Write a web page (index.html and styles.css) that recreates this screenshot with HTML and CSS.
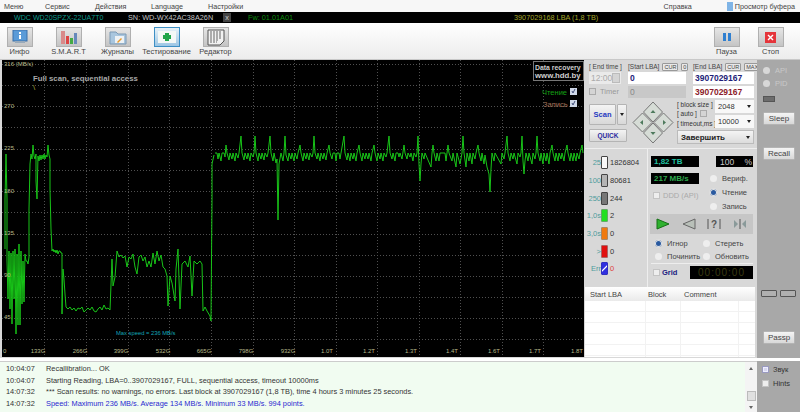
FILE: index.html
```html
<!DOCTYPE html>
<html>
<head>
	<title>Victoria</title>
	<link rel="stylesheet" href="styles.css">
</head>
<body>
	<div class="menu">
		<span class="m1">Меню</span>
		<span class="m2">Сервис</span>
		<span class="m3">Действия</span>
		<span class="m4">Language</span>
		<span class="m5">Настройки</span>
		<span class="help">Справка</span>
		<span class="buffer"><i class="buf_icon"></i>Просмотр буфера</span>
	</div>

	<div class="drive">
		<span class="d_model">WDC WD20SPZX-22UA7T0</span>
		<span class="d_sn">SN: WD-WX42AC38A26N</span>
		<span class="d_x">x</span>
		<span class="d_fw">Fw: 01.01A01</span>
		<span class="d_lba">3907029168 LBA (1,8 TB)</span>
	</div>

	<div class="toolbar">
		<div class="tool">
			<div class="tbtn">
				<svg width="16" height="14" viewBox="0 0 16 14"><rect x="1" y="0" width="14" height="11" fill="#5b9bd8" stroke="#3a6ea8"/><rect x="3" y="11" width="10" height="2" fill="#9ab"/><rect x="7" y="2" width="2" height="2" fill="#fff"/><rect x="7" y="5" width="2" height="4" fill="#fff"/></svg>
			</div>
			<span>Инфо</span>
		</div>
		<div class="tool">
			<div class="tbtn">
				<svg width="18" height="15" viewBox="0 0 18 15"><rect x="1" y="1" width="4" height="13" fill="#d98a8a"/><rect x="6" y="6" width="3" height="8" fill="#d44"/><rect x="10" y="8" width="3" height="6" fill="#4a4"/><rect x="14" y="3" width="3" height="11" fill="#68b"/></svg>
			</div>
			<span>S.M.A.R.T</span>
		</div>
		<div class="tool">
			<div class="tbtn">
				<svg width="18" height="15" viewBox="0 0 18 15"><path d="M1 2h6l2 2h8v10H1z" fill="#a9c6de" stroke="#7d9ab5"/><rect x="6" y="6" width="9" height="7" fill="#eef2f5"/><path d="M8 12l4-4 1 1-4 4z" fill="#e89a2c"/></svg>
			</div>
			<span>Журналы</span>
		</div>
		<div class="tool">
			<div class="tbtn tbtn_on">
				<svg width="20" height="14" viewBox="0 0 20 14"><rect x="1" y="1" width="18" height="12" fill="#f4f8f6"/><path d="M8 3h4v2h2v4h-2v2H8V9H6V5h2z" fill="#21a64a"/></svg>
			</div>
			<span>Тестирование</span>
		</div>
		<div class="tool">
			<div class="tbtn">
				<svg width="20" height="17" viewBox="0 0 20 17"><path d="M2 1h16v11l-4 4H2z" fill="#f2f2f2" stroke="#555"/><path d="M4 3h12M4 5h12M4 7h12M4 9h12M4 11h9M4 13h7" stroke="#666" stroke-dasharray="2 1"/></svg>
			</div>
			<span>Редактор</span>
		</div>
		<div class="tool tool_right">
			<div class="tbtn">
				<svg width="8" height="8" viewBox="0 0 8 8"><rect x="0" y="0" width="3" height="8" fill="#2f7fd0"/><rect x="5" y="0" width="3" height="8" fill="#2f7fd0"/></svg>
			</div>
			<span>Пауза</span>
		</div>
		<div class="tool">
			<div class="tbtn">
				<svg width="11" height="11" viewBox="0 0 11 11"><rect width="11" height="11" fill="#e5343a"/><path d="M3 3l5 5M8 3l-5 5" stroke="#fff" stroke-width="1.4"/></svg>
			</div>
			<span>Стоп</span>
		</div>
	</div>

	<div class="main">
		<div class="chart">
			<svg width="582" height="297" viewBox="2 61 582 297">
				<rect x="2" y="61" width="582" height="297" fill="#000"/>
				<path class="grid" d="M2 65.5H584M2 86.5H584M2 107.5H584M2 128.5H584M2 150.5H584M2 171.5H584M2 192.5H584M2 213.5H584M2 235.5H584M2 256.5H584M2 277.5H584M2 298.5H584M2 319.5H584M2 340.5H584"/>
				<path class="grid" d="M44.5 61V358M86.5 61V358M128.5 61V358M169.5 61V358M211.5 61V358M253.5 61V358M294.5 61V358M336.5 61V358M377.5 61V358M419.5 61V358M460.5 61V358M502.5 61V358M543.5 61V358"/>

				<polyline class="trace" points="5,250 5,200 6,155 7,200 7,262 8,300 9,252 10,310 11,254 12,325 13,252 14,300 15,250 16,335 17,255 18,326 19,245 20,326 21,252 22,305 23,262 24,303 25,255 26,262 27,262 28,265 29,258 29,210 30,165 31,155 32,160 33,146 34,157 35,160 36,155 36,182 37,200 38,157 39,162 40,156 41,161 42,156 43,160 44,155 45,160 46,156 47,158 48,146 49,156 50,160 50,190 51,230 52,252 53,250 54,253 55,251 56,254 57,251 58,255 59,252 60,252 61,254 62,254 62,315 63,270 64,280 65,295 66,308 68,310 70,308 72,311 74,309 76,312 78,309 80,310 82,308 84,313 86,311 88,309 90,311 92,308 94,312 96,313 98,310 100,308 102,311 104,306 106,310 108,309 110,311 112,260 113,287 115,278 117,252 119,258 121,256 123,259 125,257 127,268 129,258 131,260 133,255 135,268 137,275 139,258 141,256 143,262 145,258 147,268 149,262 151,268 153,254 155,265 157,252 159,262 161,256 163,268 165,270 167,277 168,307 170,277 172,284 175,302 176,270 178,250 180,310 182,265 185,262 188,268 190,257 192,297 194,262 197,265 200,262 202,265 203,312 205,308 207,312 210,317 211,322 212,200 212,165 214,156"/>
				<polyline class="trace" points="215,154 217,154 218,160 219,154 221,162 222,154 224,154 225,158 226,146 227,154 229,161 230,154 232,160 233,154 235,162 236,154 238,159 239,154 241,137 242,154 244,161 245,154 247,160 248,154 250,162 251,154 253,158 254,154 255,137 256,154 258,162 259,154 261,160 262,154 264,161 265,154 267,158 268,154 270,137 271,154 273,162 274,154 276,164 277,160 278,221 279,165 281,154 283,162 284,154 285,137 286,156 288,162 289,154 291,160 292,154 294,162 295,154 297,160 298,154 300,146 301,154 303,162 304,154 306,160 307,154 309,161 310,154 312,158 313,154 314,137 315,154 317,160 318,154 320,162 321,154 323,160 324,154 326,161 327,154 329,146 330,154 332,160 333,154 335,154 336,162 337,154 339,154 340,160 341,154 344,137 345,154 347,161 348,154 350,162 351,154 353,160 354,154 356,162 357,154 359,146 360,154 362,162 363,154 365,160 366,154 368,160 369,154 371,162 372,154 374,146 375,154 377,162 378,154 380,160 381,154 383,162 384,154 386,158 387,154 389,137 390,154 392,160 393,154 395,162 396,154 398,154 399,158 400,154 402,160 404,146 405,154 407,160 408,154 410,158 411,154 413,162 414,154 416,158 417,154 418,137 419,165 420,182 421,165 422,154 424,160 425,154 431,168 432,154 433,146 434,154 436,162 437,154 439,162 440,154 445,154 446,162 447,154 448,146 449,154 452,162 453,154 456,168 457,154 460,165 462,154 463,137 464,154 466,168 467,154 469,162 470,154 472,165 473,154 475,160 476,154 478,146 479,154 481,162 482,154 484,165 485,156 487,168 489,175 490,193 491,170 492,154 494,162 495,154 501,165 502,154 504,160 505,154 507,137 508,154 510,162 511,154 513,160 514,154 517,165 518,154 520,158 521,154 522,137 523,162 524,175 525,162 526,154 528,162 529,154 532,165 533,154 535,160 536,154 537,137 538,154 540,162 541,154 543,165 544,154 546,162 547,154 549,165 550,154 552,146 553,154 555,162 556,154 558,162 559,154 561,160 562,154 564,162 565,154 567,146 568,154 570,162 571,154 573,162 574,154 576,162 577,154 579,160 580,154 582,146 583,154"/>

				<text class="tick" x="4" y="67">316 (MB/s)</text>
				<text class="tick" x="4" y="109">270</text>
				<text class="tick" x="4" y="151">225</text>
				<text class="tick" x="4" y="194">180</text>
				<text class="tick" x="4" y="236">135</text>
				<text class="tick" x="4" y="278">90</text>
				<text class="tick" x="4" y="320">45</text>

				<text class="tick" x="3" y="354">0</text>
				<text class="tick_x" x="38" y="354">133G</text>
				<text class="tick_x" x="80" y="354">266G</text>
				<text class="tick_x" x="121" y="354">399G</text>
				<text class="tick_x" x="163" y="354">532G</text>
				<text class="tick_x" x="204" y="354">665G</text>
				<text class="tick_x" x="246" y="354">798G</text>
				<text class="tick_x" x="288" y="354">932G</text>
				<text class="tick_x" x="327" y="354">1.0T</text>
				<text class="tick_x" x="369" y="354">1.2T</text>
				<text class="tick_x" x="411" y="354">1.3T</text>
				<text class="tick_x" x="452" y="354">1.4T</text>
				<text class="tick_x" x="494" y="354">1.6T</text>
				<text class="tick_x" x="535" y="354">1.7T</text>
				<text class="tick_x" x="577" y="354">1.8T</text>

				<text class="title" x="33" y="82">Full scan, sequential access</text>
				<text class="slash" x="33" y="91">\</text>
				<text class="maxspeed" x="116" y="336">Max speed = 236 MB/s</text>

				<rect x="533.5" y="62.5" width="50" height="19" fill="#000" stroke="#777"/>
				<text class="rec" x="535" y="70.5">Data recovery</text>
				<text class="rec rec_b" x="535" y="79">www.hdd.by</text>

				<text class="read_lbl" x="542" y="96">Чтение</text>
				<rect x="570" y="89" width="7" height="7" fill="#cfd8e8"/>
				<path d="M572 92l1 2 2-4" class="chk"/>
				<text class="write_lbl" x="543" y="108">Запись</text>
				<rect x="570" y="101" width="7" height="7" fill="#cfd8e8"/>
				<path d="M572 104l1 2 2-4" class="chk"/>
			</svg>
		</div>

		<div class="panel">
			<div class="controls">
				<div class="lba">
					<div class="head"><span>[ End time ]</span></div>
					<div class="head"><span>[Start LBA]</span><b class="mini">CUR</b><b class="mini">0</b></div>
					<div class="head"><span>[End LBA]</span><b class="mini">CUR</b><b class="mini">MAX</b></div>

					<div class="field field_off time">12:00<i class="spin"></i></div>
					<div class="field navy">0</div>
					<div class="field navy">3907029167</div>

					<div class="timer"><i class="cb cb_off"></i>Timer</div>
					<div class="field field_gray">0</div>
					<div class="field maroon">3907029167</div>
				</div>

				<div class="scan_row">
					<div class="scan_col">
						<div class="scan_top">
							<div class="btn scan">Scan</div>
							<div class="btn scan_drop"><i class="arr"></i></div>
						</div>
						<div class="btn quick">QUICK</div>
					</div>

					<svg class="pad" width="42" height="43" viewBox="0 0 42 43">
						<g fill="#d6dcd6" stroke="#777">
							<path d="M21 1l9.5 10-9.5 10-9.5-10z"/>
							<path d="M21 22l9.5 10-9.5 10-9.5-10z"/>
							<path d="M10.5 12l9.5 9.500-9.5 9.500L1 21.500z"/>
							<path d="M31.5 12l9.5 9.500-9.500 9.500-9.500-9.500z"/>
						</g>
						<g fill="#4d7a5c">
							<path d="M21 9l-2.5 3h5z"/>
							<path d="M21 34l-2.5-3h5z"/>
							<path d="M8 21.5l3-2.5v5z"/>
							<path d="M34 21.5l-3-2.5v5z"/>
						</g>
					</svg>

					<div class="block_col">
						<div class="block_top">
							<div class="block_lbls">
								<span>[ block size ]</span>
								<span class="auto">[ auto ] <i class="cb cb_off"></i></span>
								<span>[ timeout,ms ]</span>
							</div>
							<div class="block_sels">
								<div class="sel">2048<i class="arr"></i></div>
								<div class="sel">10000<i class="arr"></i></div>
							</div>
						</div>
						<div class="sel sel_big">Завершить<i class="arr"></i></div>
					</div>
				</div>
			</div>

			<div class="status">
				<div class="stats">
					<div class="stat"><span class="s_lbl">25</span><i class="s_box b_white"></i><span>1826804</span></div>
					<div class="stat"><span class="s_lbl">100</span><i class="s_box b_lgray"></i><span>80681</span></div>
					<div class="stat"><span class="s_lbl">250</span><i class="s_box b_gray"></i><span>244</span></div>
					<div class="stat"><span class="s_lbl">1,0s</span><i class="s_box b_green"></i><span>2</span></div>
					<div class="stat"><span class="s_lbl">3,0s</span><i class="s_box b_orange"></i><span>0</span></div>
					<div class="stat"><span class="s_lbl">&gt;</span><i class="s_box b_red"></i><span>0</span></div>
					<div class="stat"><span class="s_lbl">Err</span><i class="s_box b_err"></i><span class="s_err">0</span></div>
				</div>

				<div class="state">
					<div class="read_row">
						<div class="readout r_tb">1,82 TB</div>
						<div class="readout r_pct"><span>100</span><span>%</span></div>
					</div>
					<div class="mode_row">
						<div class="mode_left">
							<div class="readout r_tb r_speed">217 MB/s</div>
							<div class="ddd"><i class="cb"></i>DDD (API)</div>
						</div>
						<div class="mode_right">
							<div class="rad_line"><i class="rad"></i>Вериф.</div>
							<div class="rad_line"><i class="rad rad_on"></i>Чтение</div>
							<div class="rad_line"><i class="rad"></i>Запись</div>
						</div>
					</div>
					<div class="transport">
						<svg width="14" height="12" viewBox="0 0 14 12"><path d="M1 1l12 5-12 5z" fill="#2fb12f" stroke="#167016"/></svg>
						<svg width="14" height="12" viewBox="0 0 14 12"><path d="M13 1L1 6l12 5z" fill="#b9c0b9" stroke="#666"/></svg>
						<svg width="14" height="12" viewBox="0 0 14 12"><path d="M1 1v10M13 1v10" stroke="#555"/><text class="q" x="7" y="10">?</text></svg>
						<svg width="14" height="12" viewBox="0 0 14 12"><path d="M1 2l4 4-4 4zM13 2L9 6l4 4z" fill="#8a9a9a"/><path d="M7 1v10" stroke="#555"/></svg>
					</div>
					<div class="repair">
						<div class="rad_line"><i class="rad rad_on"></i>Игнор</div>
						<div class="rad_line"><i class="rad"></i>Стереть</div>
						<div class="rad_line"><i class="rad"></i>Починить</div>
						<div class="rad_line"><i class="rad"></i>Обновить</div>
					</div>
					<div class="grid_row">
						<i class="cb"></i><b>Grid</b>
						<div class="clock">00:00:00</div>
					</div>
				</div>
			</div>

			<div class="table">
				<div class="t_head">
					<span class="c1">Start LBA</span>
					<span class="c2">Block</span>
					<span class="c3">Comment</span>
				</div>
				<div class="t_row"></div>
				<div class="t_row"></div>
				<div class="t_row"></div>
				<div class="t_row"></div>
				<div class="t_row"></div>
			</div>
		</div>

		<div class="side">
			<div class="rad_line s_rad"><i class="rad"></i>API</div>
			<div class="rad_line s_rad"><i class="rad"></i>PID</div>
			<i class="s_led"></i>
			<div class="btn side_btn b_sleep">Sleep</div>
			<div class="btn side_btn b_recall">Recall</div>
			<div class="s_pair"><i></i><i></i></div>
			<div class="btn side_btn b_passp">Passp</div>
		</div>
	</div>

	<div class="bottom">
		<div class="log">
			<div class="lines">
				<div class="line"><span class="time_c">10:04:07</span><span>Recallibration... OK</span></div>
				<div class="line"><span class="time_c">10:04:07</span><span>Starting Reading, LBA=0..3907029167, FULL, sequential access, timeout 10000ms</span></div>
				<div class="line"><span class="time_c">14:07:32</span><span>*** Scan results: no warnings, no errors. Last block at 3907029167 (1,8 TB), time 4 hours 3 minutes 25 seconds.</span></div>
				<div class="line"><span class="time_c">14:07:32</span><span class="blue">Speed: Maximum 236 MB/s. Average 134 MB/s. Minimum 33 MB/s. 994 points.</span></div>
			</div>
			<div class="scroll"><i class="up"></i><i class="thumb"></i><i class="down"></i></div>
		</div>
		<div class="opts">
			<div class="opt"><i class="cb cb_on"></i>Звук</div>
			<div class="opt"><i class="cb"></i>Hints</div>
		</div>
	</div>
</body>
</html>
```

FILE: styles.css
```css
* {
	box-sizing: border-box;
}

body {
	margin: 0;
	width: 800px;
	height: 412px;
	overflow: hidden;
	background: #f0f0f0;
	font-family: "Liberation Sans", Arial, sans-serif;
	font-size: 7.5px;
	color: #333;
}

i {
	display: block;
	flex: none;
}

/* top menu */
.menu {
	height: 12px;
	display: flex;
	align-items: center;
	background: #f7f7f7;
	padding-left: 4px;
	font-size: 7.2px;
	color: #444;
}

.m1 { width: 41px; }
.m2 { width: 50px; }
.m3 { width: 56px; }
.m4 { width: 57px; }

.help {
	margin-left: auto;
	margin-right: 35px;
}

.buffer {
	display: flex;
	align-items: center;
	margin-right: 5px;
}

.buf_icon {
	width: 6px;
	height: 9px;
	margin-right: 2px;
	background: #7fb4e6;
}

/* drive line */
.drive {
	height: 11px;
	display: flex;
	align-items: center;
	background: #000;
	font-size: 7.3px;
	white-space: nowrap;
}

.d_model { width: 128px; padding-left: 14px; color: #0e9a8c; font-size: 7.1px; }
.d_sn { width: 95px; color: #c4c4c4; }
.d_x { width: 8px; text-align: center; color: #ccc; background: #444; }
.d_fw { width: 283px; padding-left: 17px; color: #0c8c0c; }
.d_lba { color: #a5a52a; }

/* toolbar */
.toolbar {
	height: 37px;
	display: flex;
	padding: 4px 5px 0 0;
	background: linear-gradient(#ffffff, #ececec);
	border-bottom: 1px solid #c8c8c8;
}

.tool {
	width: 49px;
	display: flex;
	flex-direction: column;
	align-items: center;
	color: #444;
	white-space: nowrap;
}

.tool:first-child { margin-left: -5px; }

.tool_right {
	margin-left: auto;
	margin-right: -5px;
}

.tbtn {
	width: 26px;
	height: 20px;
	display: flex;
	align-items: center;
	justify-content: center;
	background: linear-gradient(#e6e6e6, #c4c4c4);
	border: 1px solid #b0b0b0;
}

.tbtn_on {
	background: linear-gradient(#e8f2f8, #9cc6e4);
	border-color: #3d8fc4;
}

/* main row */
.main {
	height: 298px;
	display: flex;
}

.chart {
	width: 585px;
	padding: 0 1px 0 2px;
	background: #d8d8d8;
}

.chart svg {
	display: block;
}

.grid {
	stroke: #505050;
	stroke-width: 1;
	stroke-dasharray: 1 2;
	fill: none;
}

.trace {
	fill: none;
	stroke: #18c418;
	stroke-width: 1;
}

.tick, .tick_x {
	font-size: 6px;
	fill: #b9b98a;
}

.tick_x {
	text-anchor: middle;
}

.title {
	font-size: 7.8px;
	font-weight: bold;
	fill: #a8a8a8;
}

.slash {
	font-size: 8px;
	fill: #a5a53a;
}

.maxspeed {
	font-size: 5.8px;
	fill: #12a6b8;
}

.rec {
	font-size: 6.9px;
	font-weight: bold;
	fill: #cfcfcf;
}

.rec_b {
	font-size: 7.8px;
}

.read_lbl {
	font-size: 7.5px;
	fill: #14a014;
}

.write_lbl {
	font-size: 7.5px;
	fill: #a8745a;
}

.chk {
	fill: none;
	stroke: #44507a;
}

/* right panel */
.panel {
	width: 172px;
	display: flex;
	flex-direction: column;
	background: #d8d8d8;
}

.controls {
	height: 89px;
	padding: 1px 3px 0 4px;
	border-bottom: 1px solid #eee;
}

.lba {
	display: grid;
	grid-template-columns: 32px 58px 61px;
	grid-template-rows: 11px 12px 12px;
	column-gap: 7px;
	row-gap: 0;
	align-items: center;
}

.head {
	display: flex;
	align-items: center;
	gap: 3px;
	font-size: 6.5px;
	color: #444;
	white-space: nowrap;
}

.head span {
	margin-right: auto;
}

.mini {
	font-weight: normal;
	font-size: 5.5px;
	padding: 0 1px;
	height: 8px;
	line-height: 6px;
	background: #e8e8e8;
	border: 1px solid #999;
	border-radius: 1px;
}

.field {
	height: 12px;
	display: flex;
	align-items: center;
	padding-left: 2px;
	background: #fff;
	font-size: 8.5px;
	font-weight: bold;
}

.lba .field:nth-child(n+7) {
	margin-top: 3px;
}

.navy { color: #1d1d78; }
.maroon { color: #8c1c2a; }

.field_off {
	background: #eaeaea;
	color: #aaa;
	font-weight: normal;
	justify-content: space-between;
	padding-right: 1px;
}

.field_gray {
	background: #c8c8c8;
	color: #888;
	font-weight: normal;
}

.spin {
	width: 8px;
	height: 10px;
	background: #d4d4d4;
	border: 1px solid #bbb;
}

.timer {
	display: flex;
	align-items: center;
	gap: 4px;
	margin-top: 3px;
	color: #999;
	font-size: 7.5px;
}

.cb {
	width: 7px;
	height: 7px;
	background: #eee;
	border: 1px solid #c4c4c4;
}

.cb_off {
	background: #d4d4d4;
	border-color: #aaa;
}

.cb_on {
	background: #d8d8f0;
	border-color: #9a9ac0;
	box-shadow: inset 0 0 0 1px #eef;
}

.scan_row {
	display: flex;
	align-items: center;
	margin-top: 4px;
}

.scan_col {
	width: 38px;
	padding-top: 1px;
}

.scan_top {
	display: flex;
	gap: 1px;
}

.btn {
	display: flex;
	align-items: center;
	justify-content: center;
	background: linear-gradient(#f4f4f4, #d8d8d8);
	border: 1px solid #b4b4b4;
	border-radius: 1px;
}

.scan {
	width: 27px;
	height: 21px;
	font-weight: bold;
	font-size: 7.5px;
	color: #2438c0;
}

.scan_drop {
	width: 10px;
	height: 21px;
}

.arr {
	width: 0;
	height: 0;
	border: 2px solid transparent;
	border-top: 3px solid #222;
	border-bottom: 0;
}

.quick {
	height: 13px;
	margin-top: 4px;
	font-weight: bold;
	font-size: 6.5px;
	color: #2a2aa0;
}

.pad {
	margin: 0 3px 0 5px;
	flex: none;
}

.block_col {
	width: 77px;
}

.block_top {
	display: flex;
}

.block_lbls {
	width: 38px;
	display: flex;
	flex-direction: column;
	justify-content: space-around;
	font-size: 6.5px;
	white-space: nowrap;
}

.auto {
	display: flex;
	align-items: center;
	gap: 3px;
}

.block_sels {
	flex: 1;
	display: flex;
	flex-direction: column;
	gap: 2px;
}

.sel {
	height: 13px;
	display: flex;
	align-items: center;
	justify-content: space-between;
	padding: 0 3px;
	background: #f8f8f8;
	font-size: 7.5px;
}

.sel_big {
	height: 14px;
	margin-top: 2px;
	background: linear-gradient(#f4f4f4, #dcdcdc);
	border: 1px solid #bbb;
	font-weight: bold;
	font-size: 8px;
	color: #222;
}

/* stats and state */
.status {
	height: 138px;
	display: flex;
}

.stats {
	width: 70px;
	padding-top: 5px;
	border-right: 1px solid #eee;
}

.stat {
	height: 17.7px;
	display: flex;
	align-items: center;
	font-size: 7.5px;
}

.s_lbl {
	width: 16px;
	text-align: right;
	color: #4f9c9c;
	white-space: nowrap;
}

.s_box {
	width: 7px;
	height: 13px;
	margin: 0 2px 0 0;
	border: 1px solid #444;
	border-radius: 1px;
}

.b_white { background: #f8f8f8; }
.b_lgray { background: #b4b4b4; }
.b_gray { background: #777; }
.b_green { background: #22e022; border-color: #6a6; }
.b_orange { background: #f07a10; border-color: #a86; }
.b_red { background: #e01010; border-color: #a66; }
.b_err { background: linear-gradient(135deg, #3030e0 40%, #fff 50%, #3030e0 60%); border-color: #3030c0; }
.s_err { color: #e04040; }

.state {
	flex: 1;
	padding: 7px 4px 0 3px;
}

.read_row {
	display: flex;
	justify-content: space-between;
}

.readout {
	height: 11px;
	display: flex;
	align-items: center;
	background: #000;
	color: #20c0a0;
	font-size: 8px;
	font-weight: bold;
}

.r_tb {
	width: 48px;
	padding-left: 3px;
}

.r_pct {
	width: 37px;
	justify-content: space-between;
	padding: 0 1px 0 4px;
	color: #ccc;
	font-weight: normal;
	font-size: 8.5px;
}

.r_speed {
	color: #2ca84c;
}

.mode_row {
	display: flex;
	height: 47px;
}

.mode_left {
	width: 57px;
	padding-top: 6px;
}

.ddd {
	display: flex;
	align-items: center;
	gap: 3px;
	margin-top: 7px;
	margin-left: 2px;
	color: #aaa;
}

.mode_right {
	display: flex;
	flex-direction: column;
	gap: 6px;
	padding-top: 7px;
}

.rad_line {
	display: flex;
	align-items: center;
	gap: 5px;
	height: 8px;
	font-size: 7.5px;
	color: #444;
	white-space: nowrap;
}

.mode_right .rad_line {
	margin-left: 2px;
}

.rad {
	width: 7px;
	height: 7px;
	border-radius: 50%;
	background: #eee;
}

.rad_on {
	background: #2a5aa0;
	box-shadow: 0 0 0 1px #e4e4e4 inset, 0 0 0 1px #ddd;
}

.transport {
	height: 20px;
	display: flex;
	align-items: center;
	justify-content: space-around;
	background: #c6c6c6;
	margin-left: -1px;
}

.q {
	font-size: 10px;
	font-weight: bold;
	fill: #555;
	text-anchor: middle;
}

.repair {
	display: grid;
	grid-template-columns: 48px 50px;
	grid-auto-rows: 8px;
	row-gap: 5px;
	padding: 5px 0 0 4px;
	height: 30px;
	border-bottom: 1px solid #eee;
}

.grid_row {
	display: flex;
	align-items: center;
	gap: 2px;
	height: 15px;
	margin-top: 1px;
	padding-left: 2px;
}

.grid_row b {
	color: #1a2080;
	font-size: 7.5px;
}

.clock {
	width: 63px;
	height: 13px;
	margin-left: auto;
	background: #000;
	color: #3a3a10;
	font-size: 10px;
	letter-spacing: 1px;
	text-align: center;
	line-height: 13px;
}

/* bad block table */
.table {
	flex: 1;
	margin: 0 2px 1px 0;
	background: linear-gradient(90deg, transparent 60px, #f2f2f2 60px, #f2f2f2 61px, transparent 61px, transparent 95px, #f2f2f2 95px, #f2f2f2 96px, transparent 96px, transparent 153px, #f2f2f2 153px, #f2f2f2 154px, transparent 154px), #fff;
}

.t_head {
	height: 14px;
	display: flex;
	align-items: center;
	background: linear-gradient(#fff, #eaeaea);
	font-size: 7.5px;
	color: #444;
}

.c1 { width: 63px; padding-left: 5px; }
.c2 { width: 36px; }

.t_row {
	height: 11px;
	border-bottom: 1px solid #f2f2f2;
}

/* far right column */
.side {
	width: 43px;
	display: flex;
	flex-direction: column;
	background: #a8a8a8;
	padding: 4px 0 0 6px;
}

.s_rad {
	height: 13px;
	color: #c8c8c8;
}

.s_rad .rad {
	background: #d8d8d8;
}

.s_led {
	width: 12px;
	height: 6px;
	margin-top: 6px;
	background: #6c6c6c;
	border: 1px solid #555;
}

.side_btn {
	width: 32px;
	height: 13px;
	font-size: 8px;
	color: #444;
}

.b_sleep { margin-top: 10px; }
.b_recall { margin-top: 22px; }

.s_pair {
	display: flex;
	gap: 3px;
	margin: 130px 0 0 -2px;
}

.s_pair i {
	width: 16px;
	height: 7px;
	border: 1px solid #555;
	border-radius: 1px;
	background: #b0b0b0;
}

.b_passp { margin-top: 34px; }

/* log */
.bottom {
	height: 54px;
	display: flex;
	padding-top: 3px;
	background: #fff;
}

.log {
	width: 757px;
	display: flex;
	background: #f1fcf1;
	border-top: 1px solid #ccc;
}

.lines {
	flex: 1;
	padding-top: 1px;
}

.line {
	height: 11.6px;
	display: flex;
	align-items: center;
	padding-left: 6px;
	font-size: 7.4px;
	color: #333;
	white-space: nowrap;
}

.time_c {
	width: 40px;
}

.blue {
	color: #2828d0;
}

.scroll {
	width: 12px;
	display: flex;
	flex-direction: column;
	align-items: center;
	background: #f4f4f4;
}

.up {
	margin-top: 5px;
	border: 2px solid transparent;
	border-bottom: 3px solid #666;
	border-top: 0;
}

.thumb {
	width: 9px;
	height: 10px;
	margin-top: auto;
	background: #e0e0e0;
	border: 1px solid #bbb;
}

.down {
	margin: 5px 0 3px;
	border: 2px solid transparent;
	border-top: 3px solid #666;
	border-bottom: 0;
}

.opts {
	flex: 1;
	padding: 1px 0 0 5px;
	background: #a8a8a8;
}

.opt {
	height: 14px;
	display: flex;
	align-items: center;
	gap: 4px;
	font-size: 7.5px;
	color: #333;
}
```
